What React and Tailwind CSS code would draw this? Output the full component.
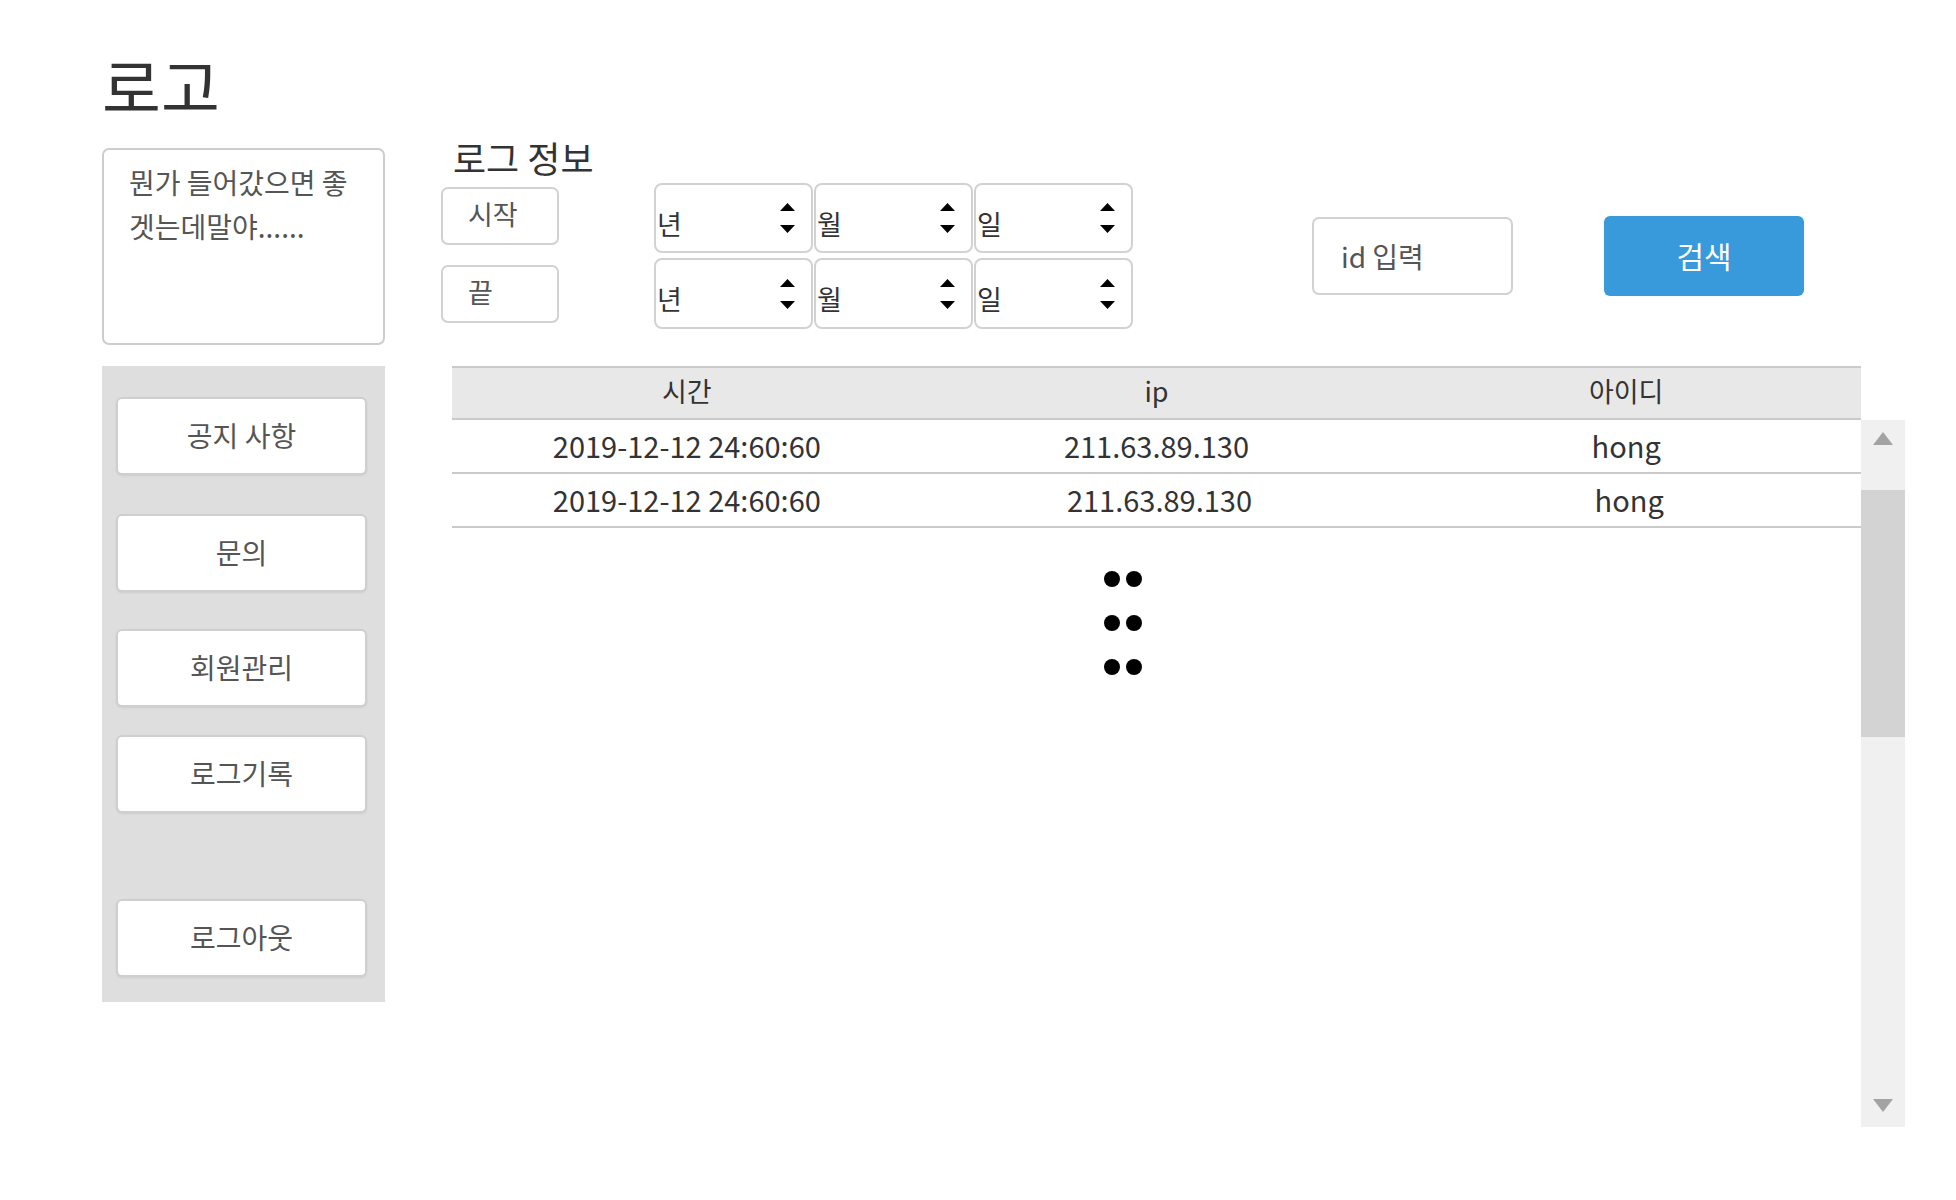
import React from 'react';

const FONT = "font-['Noto_Sans_CJK_KR','Noto_Sans',sans-serif]";

const menu = [
    { label: '공지 사항', gap: 'mt-[31px]' },
    { label: '문의', gap: 'mt-[39px]' },
    { label: '회원관리', gap: 'mt-[37px]' },
    { label: '로그기록', gap: 'mt-[28px]' },
    { label: '로그아웃', gap: 'mt-[86px]' },
];

const rows = [
    { time: '2019-12-12 24:60:60', ip: '211.63.89.130', id: 'hong' },
    { time: '2019-12-12 24:60:60', ip: '211.63.89.130', id: 'hong', nudge: true },
];

const Spinner = () => (
    <div className="flex flex-col gap-[14px] mr-[16px]">
        <svg width="15" height="8" viewBox="0 0 15 8"><path d="M7.5 0 L15 8 L0 8 Z" fill="#000" /></svg>
        <svg width="15" height="8" viewBox="0 0 15 8"><path d="M0 0 L15 0 L7.5 8 Z" fill="#000" /></svg>
    </div>
);

const DateBox = ({ label }) => (
    <div className="w-[159px] h-full bg-white border-2 border-[#d2d2d2] rounded-[8px] flex items-center justify-between pl-[1px]">
        <span className="pt-[10px] text-[27px] leading-none text-[#333]">{label}</span>
        <Spinner />
    </div>
);

const SideButton = ({ label, gap }) => (
    <div className={`${gap} w-[251px] h-[78px] bg-white border-2 border-[#cfcfcf] rounded-[6px] shadow-[0_1px_2px_rgba(0,0,0,0.08)] flex items-center justify-center pb-[3px] text-[28px] text-[#555]`}>
        {label}
    </div>
);

const App = () => {
    return (
        <div className={`w-[1956px] h-[1200px] bg-white pl-[102px] ${FONT}`}>
            <h1 className="pt-[52px] text-[64px] leading-none h-[117px] text-[#333] font-normal">로고</h1>

            <div className="flex items-start mt-[26px]">
                {/* left column */}
                <div className="w-[283px] mt-[5px] flex flex-col">
                    <div className="h-[197px] border-2 border-[#cdcdcd] rounded-[7px] pl-[25px] pt-[10px] pr-[10px] text-[28px] leading-[44px] text-[#555]">
                        뭔가 들어갔으면 좋<br />겟는데말야......
                    </div>
                    <div className="mt-[21px] h-[636px] bg-[#dedede] pl-[14px] flex flex-col">
                        {menu.map((m) => (
                            <SideButton key={m.label} label={m.label} gap={m.gap} />
                        ))}
                    </div>
                </div>

                {/* right column */}
                <div className="ml-[56px] flex flex-col">
                    <div className="flex items-start">
                        <div className="w-[118px] flex flex-col">
                            <div className="ml-[12px] -mt-[4px] h-[36px] text-[36px] leading-none text-[#333] whitespace-nowrap">로그 정보</div>
                            <div className="mt-[12px] h-[58px] border-2 border-[#d2d2d2] rounded-[7px] flex items-center pl-[25px] pb-[3px] text-[27px] text-[#555]">시작</div>
                            <div className="mt-[20px] h-[58px] border-2 border-[#d2d2d2] rounded-[7px] flex items-center pl-[25px] pb-[3px] text-[27px] text-[#555]">끝</div>
                        </div>

                        <div className="ml-[95px] mt-[40px] flex flex-col gap-[5px]">
                            <div className="flex gap-[1px] h-[70px]">
                                <DateBox label="년" />
                                <DateBox label="월" />
                                <DateBox label="일" />
                            </div>
                            <div className="flex gap-[1px] h-[71px]">
                                <DateBox label="년" />
                                <DateBox label="월" />
                                <DateBox label="일" />
                            </div>
                        </div>

                        <div className="ml-[179px] mt-[74px] w-[201px] h-[78px] border-2 border-[#d2d2d2] rounded-[7px] flex items-center pl-[27px] text-[28px] text-[#555]">
                            id 입력
                        </div>

                        <div className="ml-[91px] mt-[73px] w-[200px] h-[80px] bg-[#3899db] rounded-[6px] flex items-center justify-center pb-[1px] text-[30px] text-white">
                            검색
                        </div>
                    </div>

                    {/* log table */}
                    <div className="mt-[37px] ml-[11px]">
                        <div className="w-[1409px] h-[54px] bg-[#e8e8e8] border-y-2 border-[#cacaca] grid grid-cols-3 items-center pb-[4px] text-[27px] text-[#333] text-center">
                            <div>시간</div>
                            <div>ip</div>
                            <div>아이디</div>
                        </div>
                        <div className="flex">
                            <div className="w-[1409px] h-[707px] flex flex-col">
                                {rows.map((r, i) => (
                                    <div key={i} className="h-[54px] border-b-2 border-[#cacaca] grid grid-cols-3 items-center pb-[1px] text-[29px] text-[#333] text-center">
                                        <div>{r.time}</div>
                                        <div className={r.nudge ? 'pl-[6px]' : ''}>{r.ip}</div>
                                        <div className={r.nudge ? 'pl-[6px]' : ''}>{r.id}</div>
                                    </div>
                                ))}
                                <div className="mt-[43px] pr-[67px] flex flex-col items-center gap-[28px]">
                                    {[0, 1, 2].map((k) => (
                                        <div key={k} className="flex gap-[6px]">
                                            <div className="w-[16px] h-[16px] rounded-full bg-black" />
                                            <div className="w-[16px] h-[16px] rounded-full bg-black" />
                                        </div>
                                    ))}
                                </div>
                            </div>

                            {/* scrollbar */}
                            <div className="w-[44px] h-[707px] bg-[#f0f0f0] flex flex-col items-center">
                                <svg className="mt-[12px]" width="20" height="13" viewBox="0 0 20 13"><path d="M10 0 L20 13 L0 13 Z" fill="#a3a3a3" /></svg>
                                <div className="mt-[45px] w-full h-[247px] bg-[#d3d3d3]" />
                                <div className="flex-1" />
                                <svg className="mb-[15px]" width="20" height="13" viewBox="0 0 20 13"><path d="M0 0 L20 0 L10 13 Z" fill="#a3a3a3" /></svg>
                            </div>
                        </div>
                    </div>
                </div>
            </div>
        </div>
    );
};

export default App;
